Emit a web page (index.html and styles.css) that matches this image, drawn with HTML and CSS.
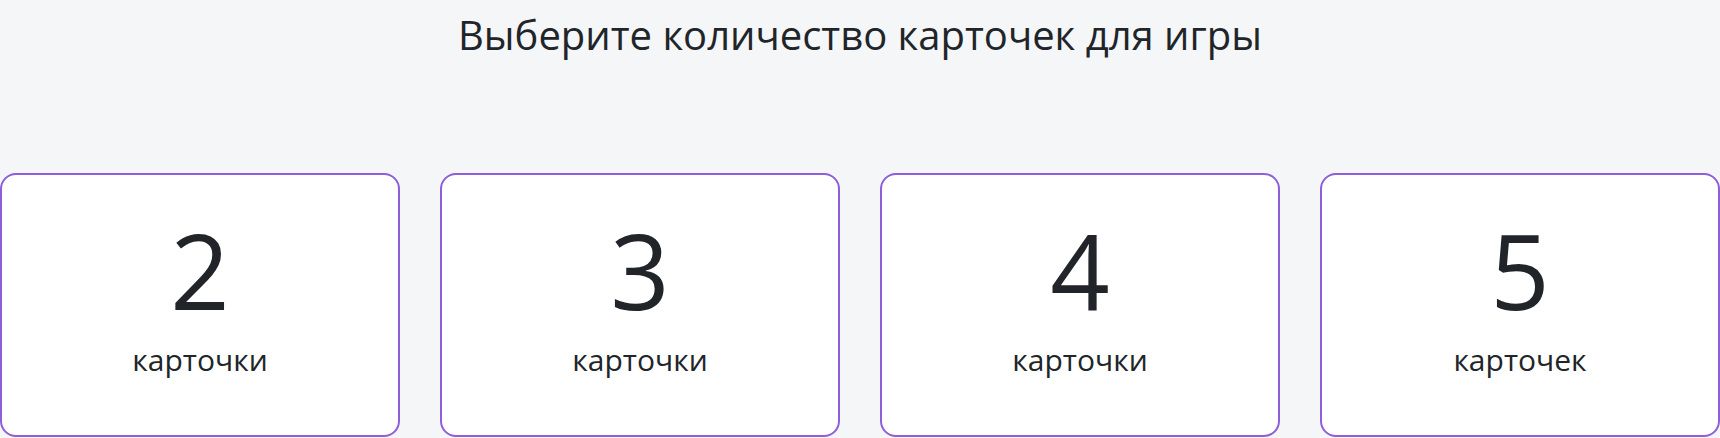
FILE: index.html
```html
<!DOCTYPE html>
<html lang="ru">
<head>
    <meta charset="UTF-8">
    <meta name="viewport" content="width=device-width, initial-scale=1.0">
    <title>Выбор количества карточек</title>
    <link rel="stylesheet" href="styles.css">
</head>
<body>
    <h1 class="title">Выберите количество карточек для игры</h1>

    <!-- Варианты количества карточек -->
    <div class="choices">
        <div class="choice">
            <span class="choice-number">2</span>
            <span class="choice-label">карточки</span>
        </div>
        <div class="choice">
            <span class="choice-number">3</span>
            <span class="choice-label">карточки</span>
        </div>
        <div class="choice">
            <span class="choice-number">4</span>
            <span class="choice-label">карточки</span>
        </div>
        <div class="choice">
            <span class="choice-number">5</span>
            <span class="choice-label">карточек</span>
        </div>
    </div>
</body>
</html>
```

FILE: styles.css
```css
body {
    font-family: "Open Sans", sans-serif;
    margin: 0;
    padding: 0;
    background-color: #f5f6f8;
    color: #212529;
}
.title {
    margin: 0;
    padding-top: 11px;
    font-size: 40px;
    font-weight: 400;
    line-height: 1.2;
    text-align: center;
}
.choices {
    display: grid;
    grid-template-columns: repeat(4, 1fr);
    gap: 40px;
    margin-top: 114px;
}
.choice {
    box-sizing: border-box;
    height: 264px;
    padding-bottom: 15px;
    display: flex;
    flex-direction: column;
    align-items: center;
    justify-content: center;
    background: white;
    border: 2px solid #8f5fdb;
    border-radius: 16px;
    cursor: pointer;
}
.choice-number {
    font-size: 104px;
    line-height: 1;
}
.choice-label {
    margin-top: 20px;
    font-size: 30px;
    line-height: 1.2;
}
```
